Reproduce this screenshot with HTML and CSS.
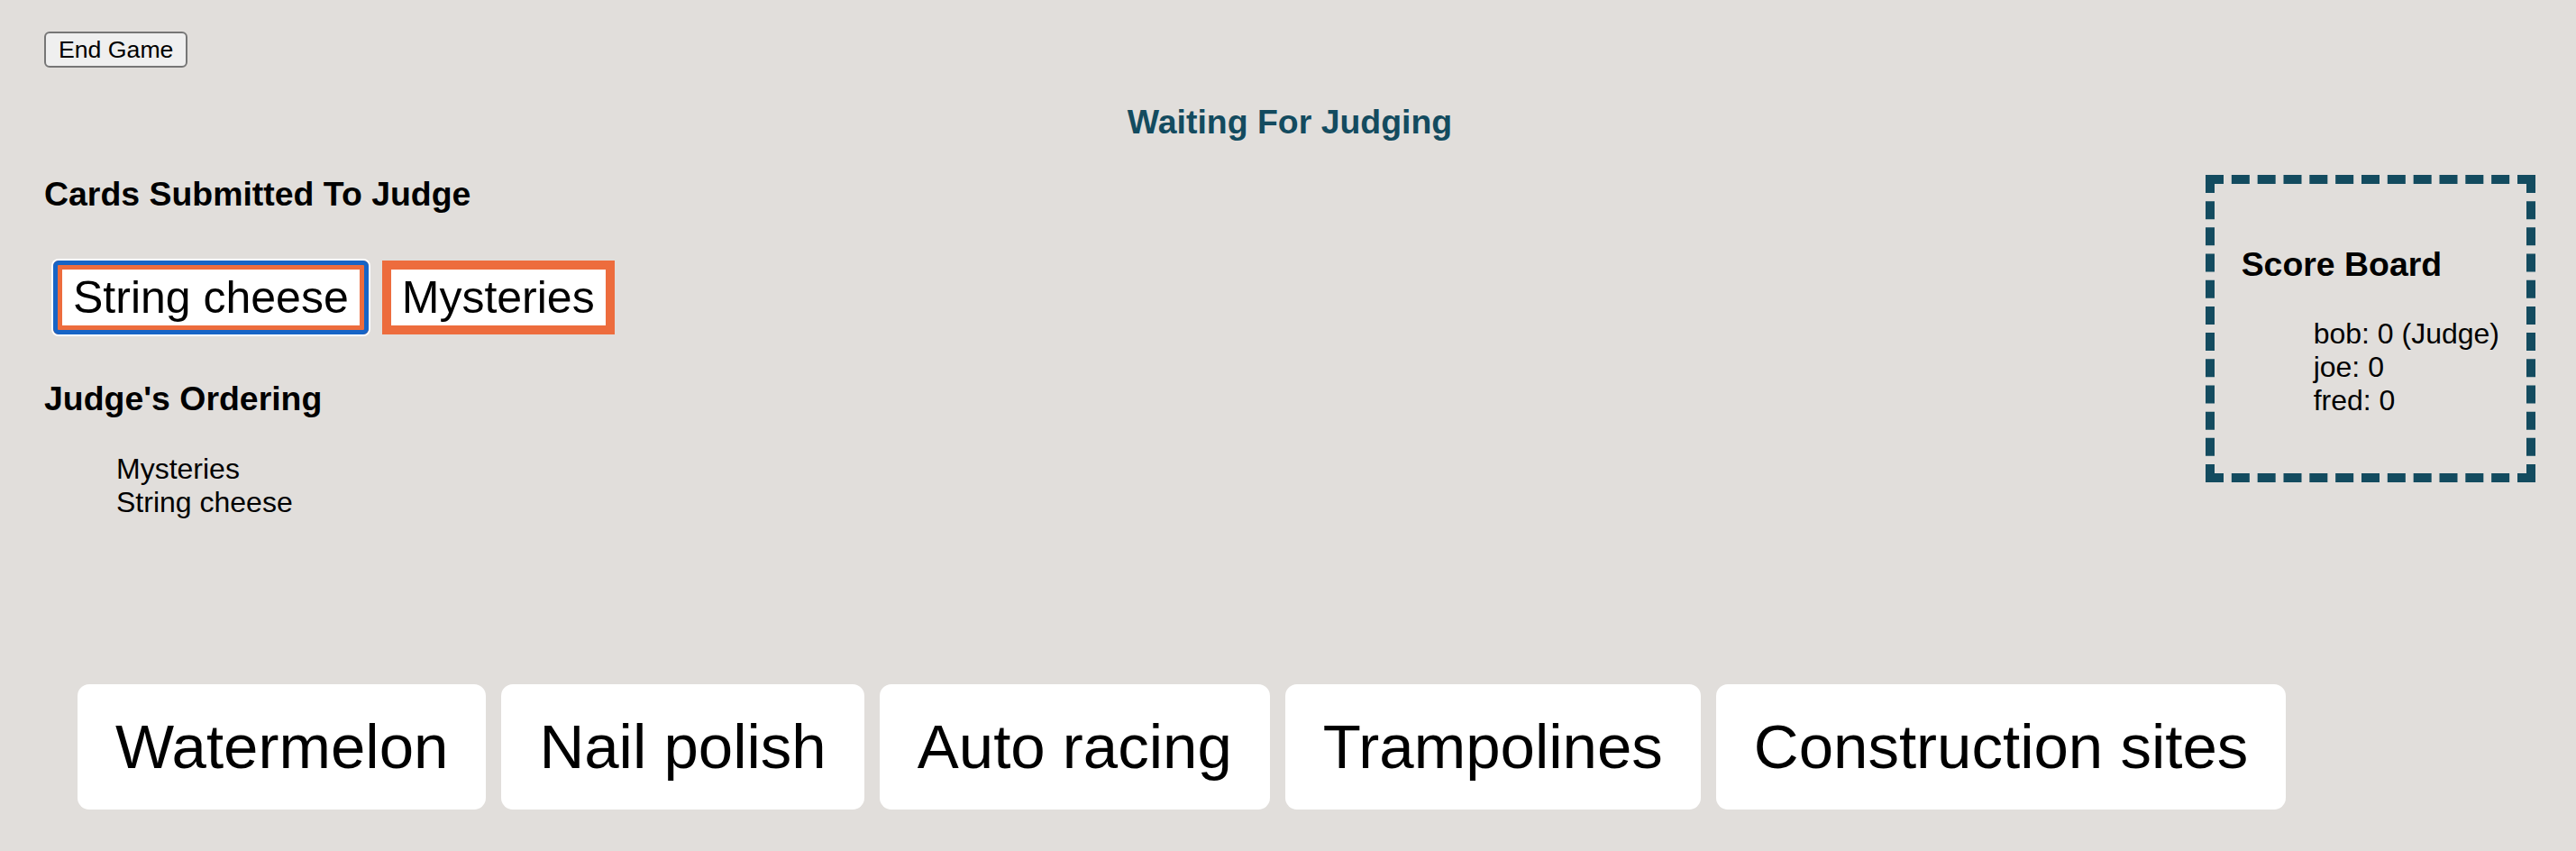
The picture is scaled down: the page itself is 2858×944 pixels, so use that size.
FILE: index.html
```html
<!DOCTYPE html>
<html lang="en">
<head>
<meta charset="utf-8">
<title>Waiting For Judging</title>
<link rel="stylesheet" href="styles.css">
</head>
<body>
<div class="app">
  <button class="end-btn" type="button">End Game</button>
  <h3 class="status">Waiting For Judging</h3>
  <div class="board">
    <div class="left">
      <h3 class="section-title first">Cards Submitted To Judge</h3>
      <div class="submitted">
        <div class="sub-card focused">String cheese</div>
        <div class="sub-card">Mysteries</div>
      </div>
      <h3 class="section-title">Judge's Ordering</h3>
      <ul class="ordering">
        <li>Mysteries</li>
        <li>String cheese</li>
      </ul>
    </div>
    <div class="scoreboard">
      <h3 class="score-title">Score Board</h3>
      <ul class="scores">
        <li>bob: 0 (Judge)</li>
        <li>joe: 0</li>
        <li>fred: 0</li>
      </ul>
    </div>
  </div>
  <div class="hand">
    <div class="hand-card">Watermelon</div>
    <div class="hand-card">Nail polish</div>
    <div class="hand-card">Auto racing</div>
    <div class="hand-card">Trampolines</div>
    <div class="hand-card">Construction sites</div>
  </div>
</div>
</body>
</html>
```

FILE: styles.css
```css
html {
  background: #e1dedb;
}

body {
  margin: 16px;
  font-family: "Liberation Sans", Arial, Helvetica, sans-serif;
  font-size: 32px;
  color: #000;
  background: #e1dedb;
}

.app {
  padding: 19px 29px 0 33px;
}

.end-btn {
  display: block;
  box-sizing: border-box;
  height: 40px;
  padding: 0 14px;
  font-family: "Liberation Sans", Arial, Helvetica, sans-serif;
  font-size: 26.67px;
  color: #000;
  background: #efefef;
  border: 2px solid #767676;
  border-radius: 6px;
}

h3 {
  font-size: 37.44px;
  font-weight: bold;
  line-height: normal;
  margin: 37.44px 0;
}

.status {
  margin-top: 39px;
  text-align: center;
  color: #134b5f;
}

.board {
  display: flex;
  justify-content: space-between;
  align-items: flex-start;
}

.section-title.first {
  margin-top: 0;
}

.submitted {
  display: flex;
  gap: 15px;
  padding: 14px 0 13px 10px;
}

.sub-card {
  background: #fff;
  border: 10px solid #ed6c3d;
  padding: 2px 12px;
  font-size: 50px;
  line-height: normal;
}

.sub-card.focused {
  border-radius: 6px;
  outline: 5px solid #1764c6;
  outline-offset: -5px;
  box-shadow: 0 0 0 2px #fff;
}

.ordering,
.scores {
  list-style: none;
  margin: 32px 0;
  padding-left: 80px;
}

.scoreboard {
  border: 10px dashed #134b5f;
  padding: 30px;
}

.hand {
  display: flex;
  gap: 17px;
  margin-top: 151px;
  padding-left: 37px;
}

.hand-card {
  background: #fff;
  border-radius: 13px;
  padding: 30px 42px;
  font-size: 69px;
  line-height: normal;
  white-space: nowrap;
}
```
